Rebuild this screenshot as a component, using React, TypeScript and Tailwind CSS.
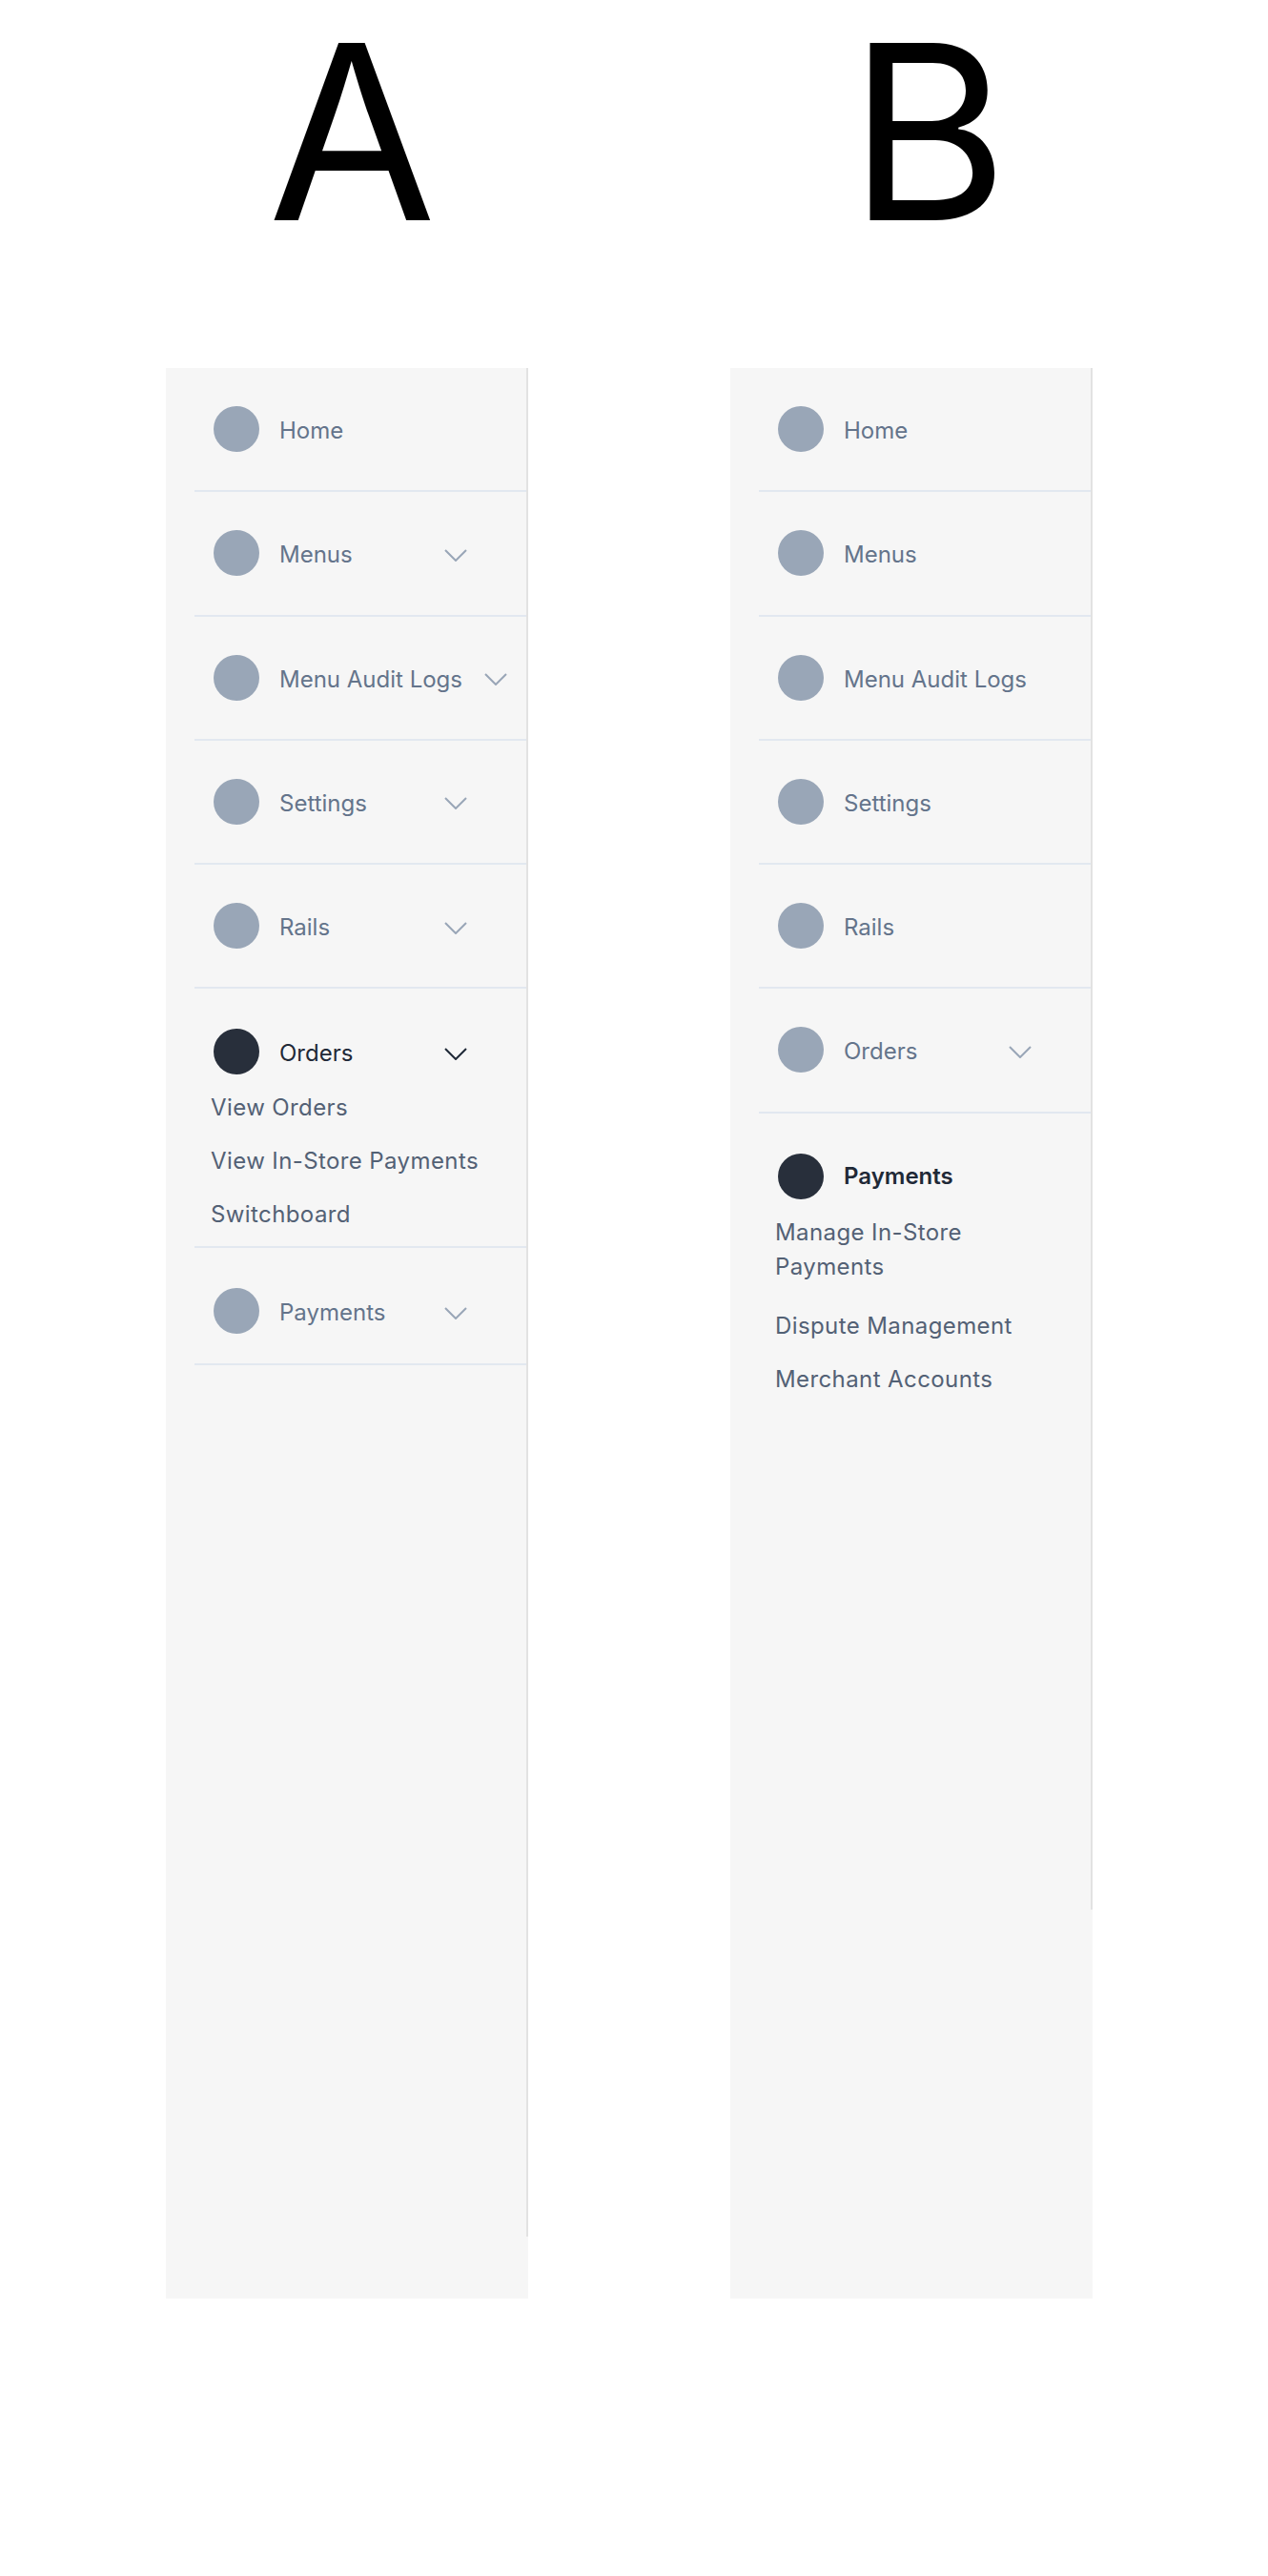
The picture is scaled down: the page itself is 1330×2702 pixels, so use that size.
type Row = {
  label: string
  chevron?: boolean
  active?: boolean
  bold?: boolean
  sub?: string[]
  last?: boolean
  border?: boolean
}

const panelA: Row[] = [
  { label: "Home", border: true },
  { label: "Menus", chevron: true, border: true },
  { label: "Menu Audit Logs", chevron: true, border: true },
  { label: "Settings", chevron: true, border: true },
  { label: "Rails", chevron: true, border: true },
  {
    label: "Orders",
    chevron: true,
    active: true,
    border: true,
    sub: ["View Orders", "View In-Store Payments", "Switchboard"],
  },
  { label: "Payments", chevron: true, border: true, last: true },
]

const panelB: Row[] = [
  { label: "Home", border: true },
  { label: "Menus", border: true },
  { label: "Menu Audit Logs", border: true },
  { label: "Settings", border: true },
  { label: "Rails", border: true },
  { label: "Orders", chevron: true, border: true },
  {
    label: "Payments",
    active: true,
    bold: true,
    last: true,
    sub: ["Manage In-Store Payments", "Dispute Management", "Merchant Accounts"],
  },
]

// these wrap onto two lines and get a little extra room below
const tallItems = ["Manage In-Store Payments"]

function Chevron({ active }: { active?: boolean }) {
  return (
    <svg
      width="24"
      height="13"
      viewBox="0 0 24 13"
      fill="none"
      className={`ml-[23px] mt-1 shrink-0 ${active ? "text-[#1f2937]" : "text-[#99a6b7]"}`}
    >
      <path d="M1 1l11 11L23 1" stroke="currentColor" strokeWidth={2} />
    </svg>
  )
}

function NavRow({ row }: { row: Row }) {
  const top = row.last || row.sub ? "pt-[42px]" : "pt-10"
  const bottom = row.sub ? "pb-[15px]" : row.last ? "pb-[31px]" : "pb-[40.25px]"

  return (
    <div className={`ml-[30px] ${top} ${bottom} ${row.border ? "border-b-2 border-slate-200" : ""}`}>
      <div className="flex items-center pl-5">
        <span
          className={`size-12 shrink-0 rounded-full ${row.active ? "bg-[#282f3b]" : "bg-[#99a6b7]"}`}
        />
        <span
          className={`ml-[21px] min-w-[150px] text-[24px] leading-[36px] ${
            row.bold ? "mt-0 font-semibold" : "mt-1"
          } ${row.active ? "text-[#1f2937]" : "text-[#64748b]"}`}
        >
          {row.label}
        </span>
        {row.chevron && <Chevron active={row.active} />}
      </div>
      {row.sub && (
        <ul className="mt-[17px] flex flex-col gap-5 pl-[17px]">
          {row.sub.map((s) => (
            <li
              key={s}
              className={`max-w-[300px] text-[24px] leading-[36px] tracking-[0.4px] text-[#536175] ${
                tallItems.includes(s) ? "pb-[6px]" : ""
              }`}
            >
              {s}
            </li>
          ))}
        </ul>
      )}
    </div>
  )
}

function Column({
  letter,
  letterClass,
  rows,
  navHeight,
}: {
  letter: string
  letterClass: string
  rows: Row[]
  navHeight: string
}) {
  return (
    <div className="flex w-[380px] flex-col">
      <div className={`h-[386px] pt-[10px] text-[256px] leading-none text-black ${letterClass}`}>
        {letter}
      </div>
      <div className="h-[2025px] w-[380px] bg-[#f6f6f6]">
        <nav className={`border-r-2 border-[#e2e2e2] ${navHeight}`}>
          {rows.map((r) => (
            <NavRow key={r.label} row={r} />
          ))}
        </nav>
      </div>
    </div>
  )
}

export default function App() {
  return (
    <div className="flex min-h-[2702px] gap-[212px] bg-white pl-[174px] font-[Inter,sans-serif]">
      <Column letter="A" letterClass="pl-[107px]" rows={panelA} navHeight="h-[1960px]" />
      <Column letter="B" letterClass="pl-[124px]" rows={panelB} navHeight="h-[1617px]" />
    </div>
  )
}
